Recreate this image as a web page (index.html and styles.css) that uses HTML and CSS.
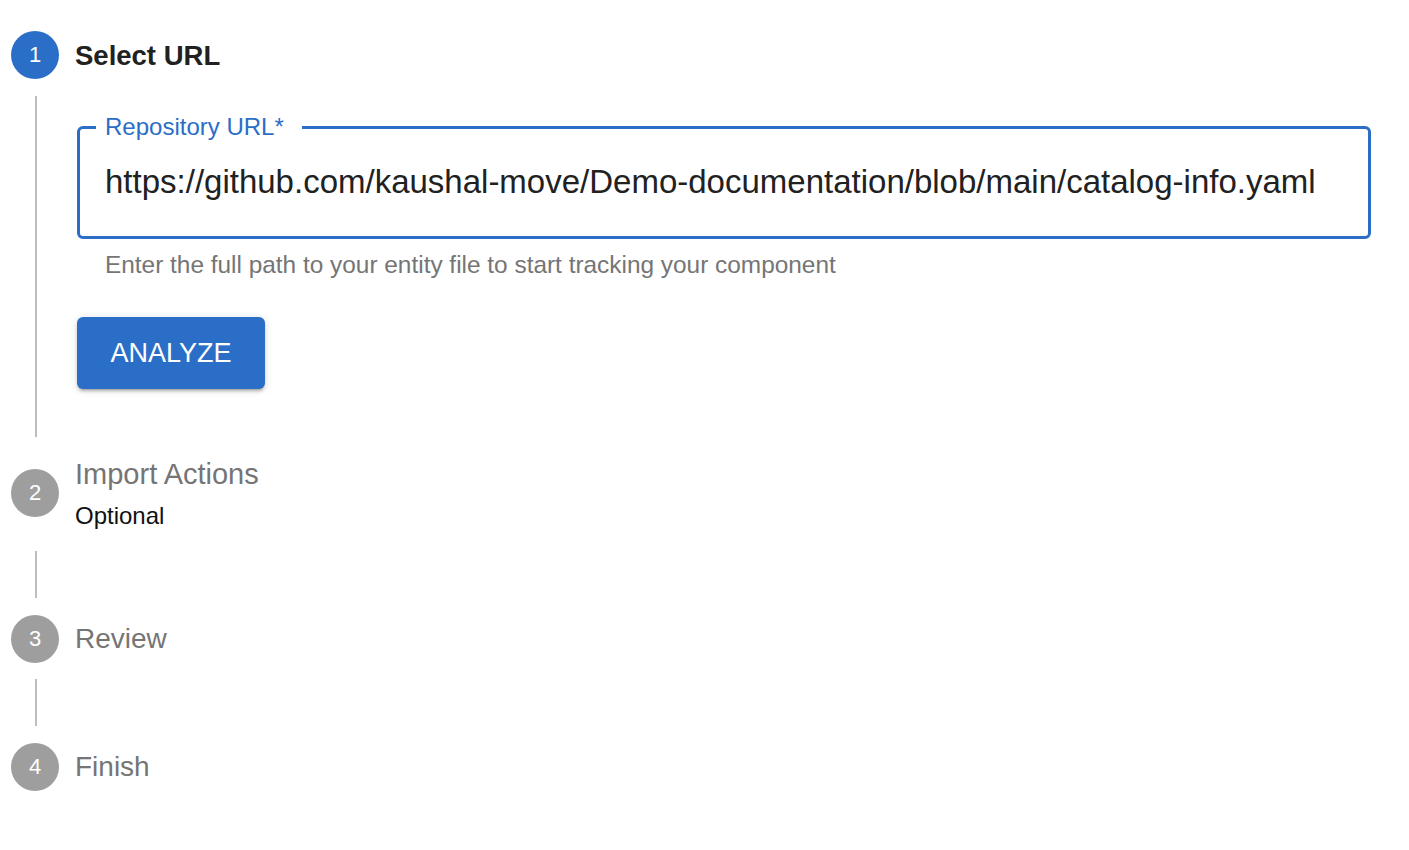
FILE: index.html
```html
<!DOCTYPE html>
<html lang="en">
<head>
<meta charset="utf-8">
<title>Register component</title>
<link rel="stylesheet" href="styles.css">
</head>
<body>
<div class="stepper">
  <div class="step">
    <div class="step-head">
      <span class="icon active">1</span>
      <span class="label active">Select URL</span>
    </div>
    <div class="content">
      <div class="rail"></div>
      <div class="body">
        <fieldset class="field">
          <legend class="field-label">Repository URL*</legend>
          <div class="field-input">https://github.com/kaushal-move/Demo-documentation/blob/main/catalog-info.yaml</div>
        </fieldset>
        <p class="helper">Enter the full path to your entity file to start tracking your component</p>
        <button class="btn" type="button">ANALYZE</button>
      </div>
    </div>
  </div>

  <div class="step step-two">
    <div class="step-head top">
      <span class="icon icon-offset">2</span>
      <div class="label-block">
        <span class="label label-wide">Import Actions</span>
        <span class="optional">Optional</span>
      </div>
    </div>
    <div class="connector"><div class="rail"></div></div>
  </div>

  <div class="step">
    <div class="step-head">
      <span class="icon">3</span>
      <span class="label">Review</span>
    </div>
    <div class="connector"><div class="rail"></div></div>
  </div>

  <div class="step">
    <div class="step-head">
      <span class="icon">4</span>
      <span class="label">Finish</span>
    </div>
  </div>
</div>
</body>
</html>
```

FILE: styles.css
```css
html, body {
  margin: 0;
  padding: 0;
  background: #ffffff;
}

body {
  font-family: "Liberation Sans", Arial, Helvetica, sans-serif;
  color: #212121;
}

.stepper {
  padding: 31px 0 0 11px;
  display: flex;
  flex-direction: column;
}

.step-head {
  display: flex;
  align-items: center;
  gap: 16px;
  min-height: 48px;
}

.step-head.top {
  align-items: flex-start;
}

.icon {
  flex: none;
  width: 48px;
  height: 48px;
  border-radius: 50%;
  background: #9e9e9e;
  color: #ffffff;
  font-size: 22px;
  line-height: 48px;
  text-align: center;
}

.icon.active {
  background: #2a6ec8;
}

.icon-offset {
  margin-top: 14px;
}

.label {
  font-size: 28px;
  line-height: 30px;
  color: #757575;
}

.label-wide {
  font-size: 29px;
}

.label.active {
  color: #212121;
  font-weight: bold;
  font-size: 27.5px;
  line-height: 32px;
  padding-top: 2px;
}

.label-block {
  display: flex;
  flex-direction: column;
  gap: 12px;
  padding: 4px 0;
}

.optional {
  font-size: 24px;
  line-height: 30px;
  color: #111111;
}

.content {
  display: flex;
  margin-top: 17px;
  margin-bottom: 18px;
}

.rail {
  flex: none;
  width: 2px;
  margin-left: 24px;
  background: #bdbdbd;
}

.body {
  margin-left: 40px;
  flex: 1;
  padding: 19px 38px 48px 0;
}

.field {
  margin: 0;
  border: 3px solid #2a6ec8;
  border-radius: 6px;
  padding: 0 25px;
  min-width: 0;
}

.field-label {
  margin-left: -9px;
  padding: 0 18px 0 9px;
  font-size: 24px;
  line-height: 24px;
  color: #2a6ec8;
}

.field-input {
  font-size: 33px;
  line-height: 36px;
  color: #212121;
  padding: 25px 0 36px;
  white-space: nowrap;
}

.helper {
  margin: 14px 0 0 28px;
  font-size: 24.4px;
  line-height: 24px;
  color: #757575;
}

.btn {
  margin-top: 40px;
  width: 188px;
  height: 72px;
  border: 0;
  border-radius: 6px;
  background: #2a6ec8;
  color: #ffffff;
  font-family: "Liberation Sans", Arial, Helvetica, sans-serif;
  font-size: 27px;
  font-weight: 500;
  box-shadow: 0 4px 2px -3px rgba(0,0,0,0.2), 0 3px 3px 0 rgba(0,0,0,0.14), 0 1px 8px 0 rgba(0,0,0,0.12);
  display: block;
}

.connector {
  display: flex;
  height: 47px;
  margin: 16px 0 17px;
}
```
